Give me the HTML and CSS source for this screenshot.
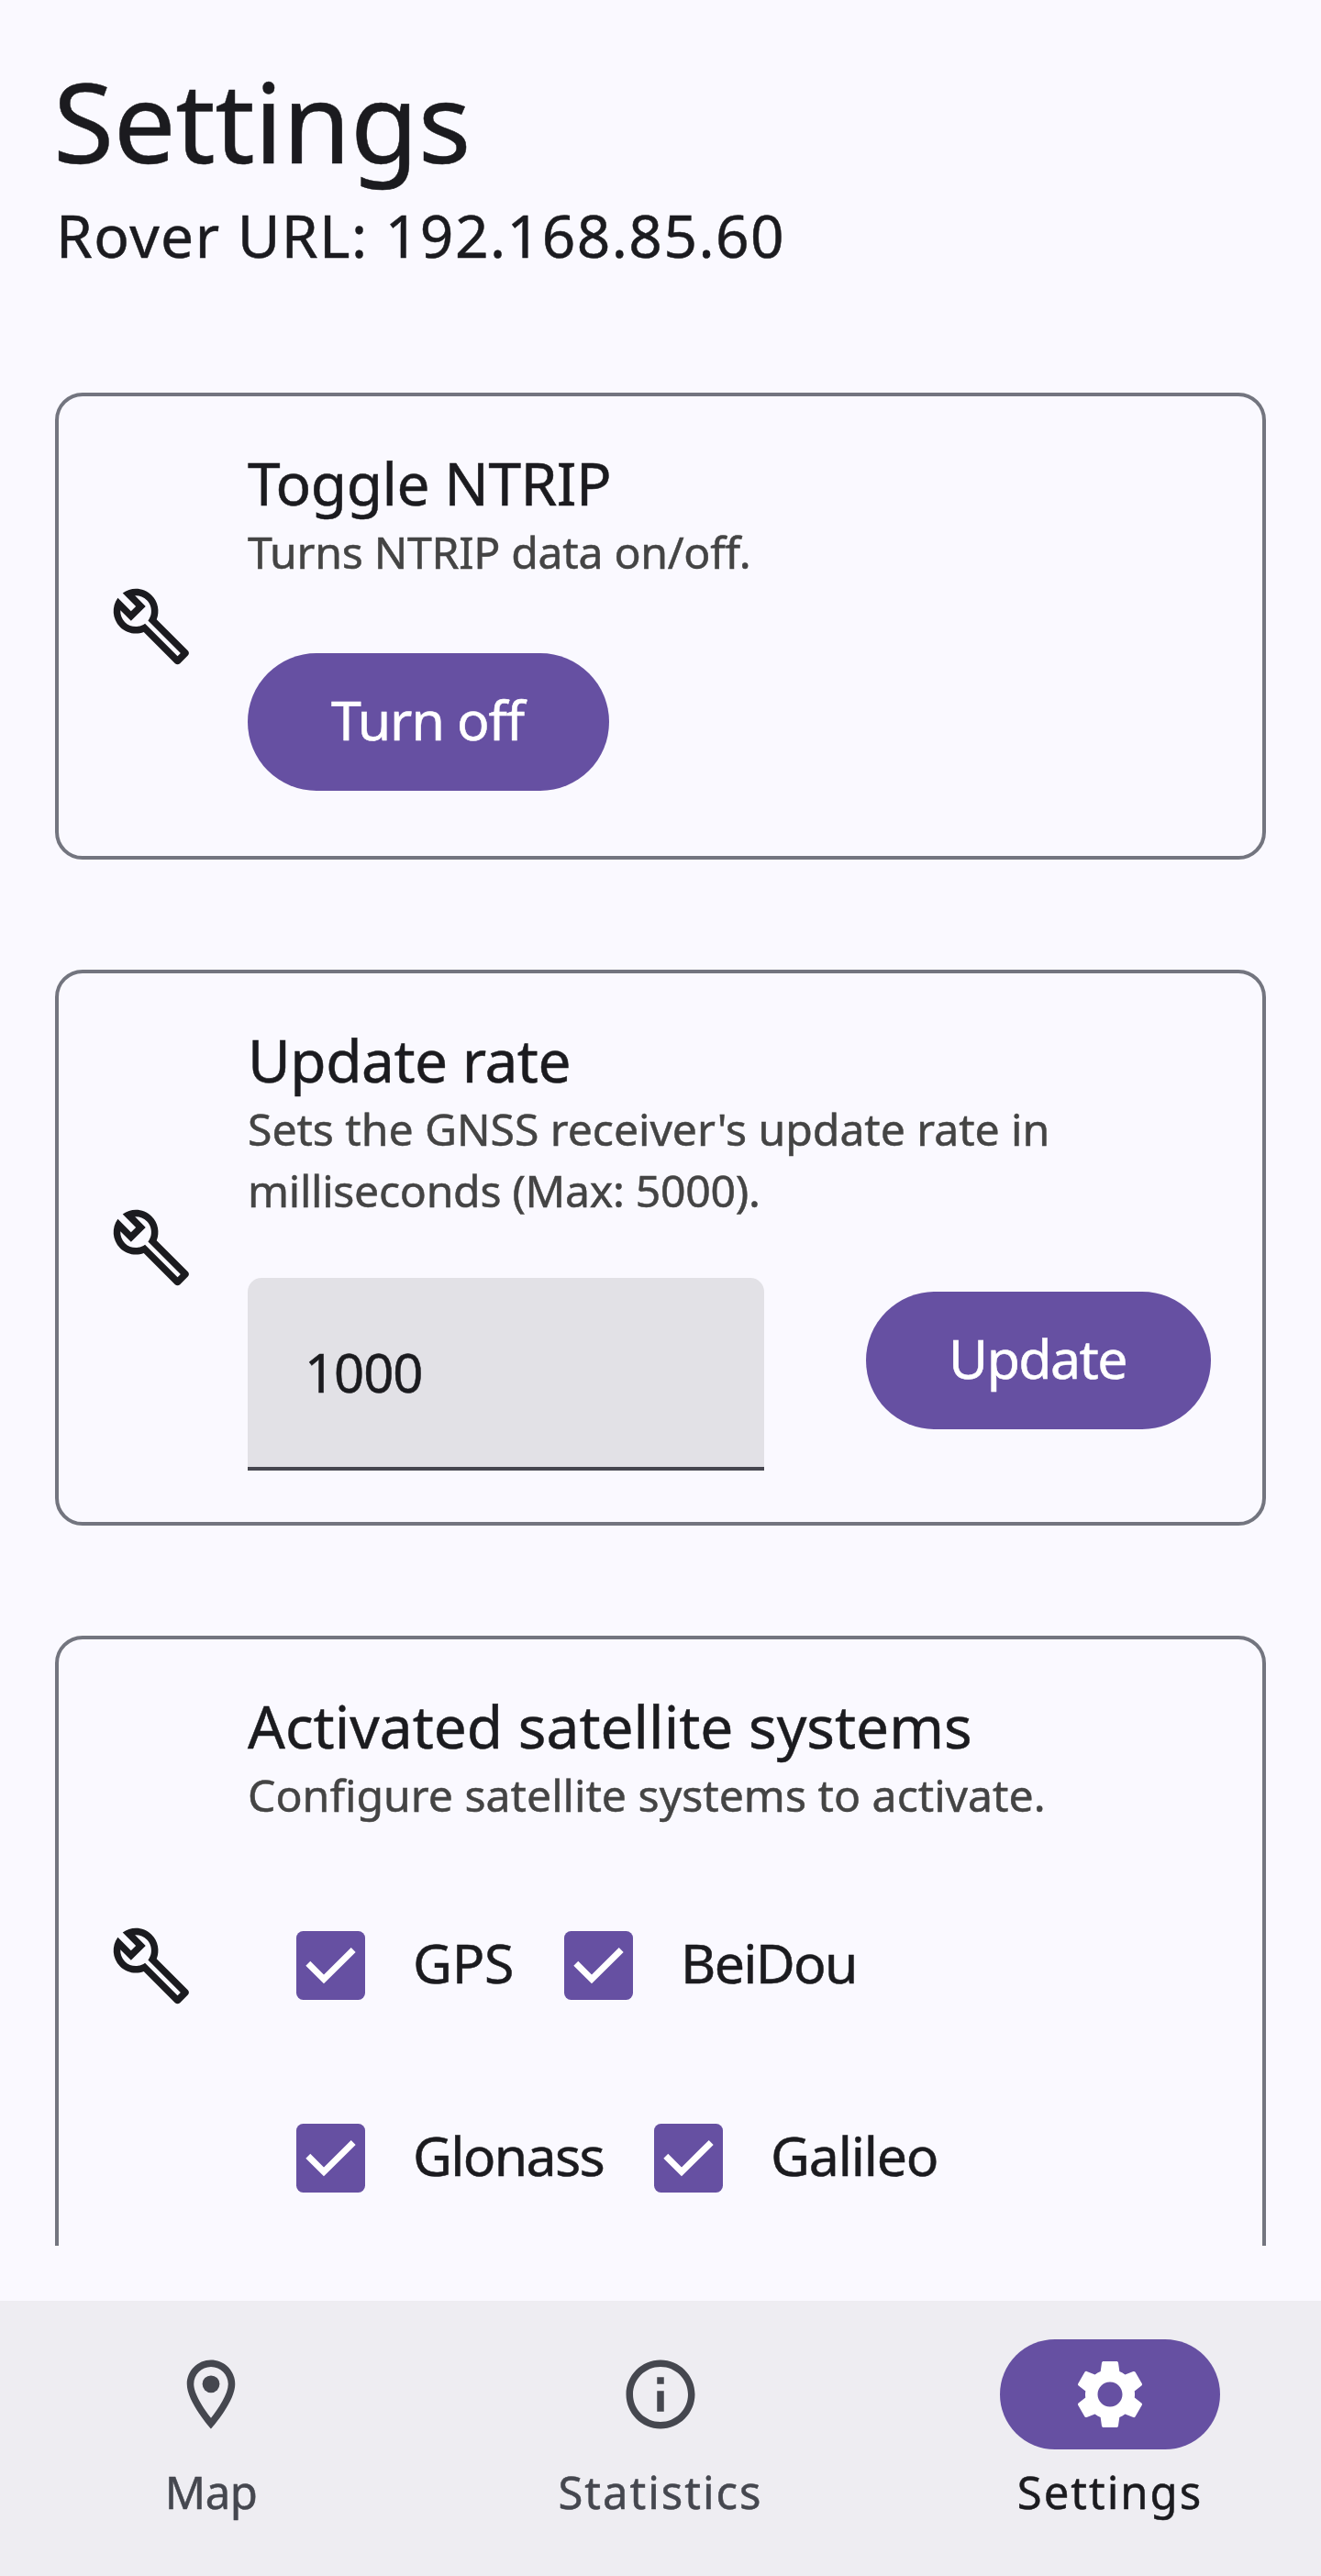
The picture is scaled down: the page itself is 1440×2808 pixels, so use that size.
FILE: index.html
```
<!DOCTYPE html>
<html lang="en">
<head>
<meta charset="utf-8">
<title>Settings</title>
<link rel="stylesheet" href="styles.css">
</head>
<body>
<svg class="defs" aria-hidden="true">
  <symbol id="wrench" viewBox="0 0 24 24"><path d="M22.61 18.99l-9.08-9.08c.93-2.34.45-5.1-1.44-7C9.79.61 6.21.4 3.66 2.26L7.5 6.11 6.08 7.52 2.25 3.69C.39 6.23.6 9.82 2.9 12.11c1.86 1.86 4.57 2.35 6.89 1.48l9.11 9.11c.39.39 1.02.39 1.41 0l2.3-2.3c.4-.38.4-1.01 0-1.41zm-3 1.6l-9.46-9.46c-.61.45-1.29.72-2 .82-1.36.2-2.79-.21-3.83-1.25C3.37 9.76 2.93 8.5 3 7.26l3.09 3.09 4.24-4.24-3.09-3.09c1.24-.07 2.49.37 3.44 1.31 1.08 1.08 1.49 2.57 1.24 3.96-.12.71-.42 1.37-.88 1.96l9.45 9.45-.88.89z"/></symbol>
  <symbol id="check" viewBox="0 0 75 75"><path d="M12.8 35.2L30 52.4L62.2 20.4" fill="none" stroke="currentColor" stroke-width="7"/></symbol>
</svg>
<div class="screen">
  <main class="content">
    <header class="header">
      <h1 class="title">Settings</h1>
      <p class="rover">Rover URL: 192.168.85.60</p>
    </header>

    <section class="card card-toggle">
      <svg class="icon"><use href="#wrench"/></svg>
      <div class="card-body">
        <h2 class="card-title tight">Toggle NTRIP</h2>
        <p class="card-text turns">Turns NTRIP data on/off.</p>
        <button class="button turn-off">Turn off</button>
      </div>
    </section>

    <section class="card card-rate">
      <svg class="icon"><use href="#wrench"/></svg>
      <div class="card-body">
        <h2 class="card-title tight">Update rate</h2>
        <p class="card-text"><span class="sets">Sets the GNSS receiver's update rate in</span><br><span class="turns">milliseconds (Max: 5000).</span></p>
        <div class="rate-row">
          <div class="field">1000</div>
          <button class="button update">Update</button>
        </div>
      </div>
    </section>

    <section class="card card-systems">
      <svg class="icon"><use href="#wrench"/></svg>
      <div class="card-body">
        <h2 class="card-title">Activated satellite systems</h2>
        <p class="card-text">Configure satellite systems to activate.</p>
        <div class="systems">
          <div class="systems-row first">
            <label class="system"><span class="box"><svg><use href="#check"/></svg></span><span class="name gps">GPS</span></label>
            <label class="system"><span class="box"><svg><use href="#check"/></svg></span><span class="name">BeiDou</span></label>
          </div>
          <div class="systems-row second">
            <label class="system"><span class="box"><svg><use href="#check"/></svg></span><span class="name">Glonass</span></label>
            <label class="system"><span class="box"><svg><use href="#check"/></svg></span><span class="name galileo">Galileo</span></label>
          </div>
        </div>
      </div>
    </section>
  </main>

  <nav class="nav">
    <a class="nav-item">
      <span class="pill"><svg class="icon" viewBox="0 0 24 24"><path d="M12 2C8.13 2 5 5.13 5 9c0 5.25 7 13 7 13s7-7.75 7-13c0-3.87-3.13-7-7-7zM7 9c0-2.76 2.24-5 5-5s5 2.24 5 5c0 2.88-2.88 7.19-5 9.88C9.92 16.21 7 11.85 7 9z"/><circle cx="12" cy="9" r="2.5"/></svg></span>
      <span class="nav-label map">Map</span>
    </a>
    <a class="nav-item">
      <span class="pill"><svg class="icon" viewBox="0 0 24 24"><path d="M11 7h2v2h-2zm0 4h2v6h-2zm1-9C6.48 2 2 6.48 2 12s4.48 10 10 10 10-4.48 10-10S17.52 2 12 2zm0 18c-4.41 0-8-3.59-8-8s3.59-8 8-8 8 3.59 8 8-3.59 8-8 8z"/></svg></span>
      <span class="nav-label">Statistics</span>
    </a>
    <a class="nav-item active">
      <span class="pill"><svg class="icon" viewBox="0 0 24 24"><path d="M19.14 12.94c.04-.3.06-.61.06-.94 0-.32-.02-.64-.07-.94l2.03-1.58c.18-.14.23-.41.12-.61l-1.92-3.32c-.12-.22-.37-.29-.59-.22l-2.39.96c-.5-.38-1.03-.7-1.62-.94L14.4 2.81c-.04-.24-.24-.41-.48-.41h-3.84c-.24 0-.43.17-.47.41L9.25 5.35C8.66 5.59 8.12 5.92 7.63 6.29L5.24 5.33c-.22-.08-.47 0-.59.22L2.74 8.87c-.12.21-.08.47.12.61l2.03 1.58C4.84 11.36 4.8 11.69 4.8 12s.02.64.07.94l-2.03 1.58c-.18.14-.23.41-.12.61l1.92 3.32c.12.22.37.29.59.22l2.39-.96c.5.38 1.03.7 1.62.94l.36 2.54c.05.24.24.41.48.41h3.84c.24 0 .44-.17.47-.41l.36-2.54c.59-.24 1.13-.56 1.62-.94l2.39.96c.22.08.47 0 .59-.22l1.92-3.32c.12-.22.07-.47-.12-.61L19.14 12.94zM12 15.6c-1.98 0-3.6-1.62-3.6-3.6s1.62-3.6 3.6-3.6 3.6 1.62 3.6 3.6-1.62 3.6-3.6 3.6z"/></svg></span>
      <span class="nav-label">Settings</span>
    </a>
  </nav>
</div>
</body>
</html>
```
FILE: styles.css
```
* { box-sizing: border-box; }

body {
  margin: 0;
  background: #faf9ff;
  color: #1b1b1f;
  font-family: "Noto Sans", "Open Sans", sans-serif;
  -webkit-text-stroke: 0.5px currentColor;
}

h1, h2, p { margin: 0; font-weight: 400; }

.defs { display: none; }

.screen {
  display: flex;
  flex-direction: column;
  width: 1440px;
  height: 2808px;
}

.content {
  height: 2448px;
  padding: 56px 60px 0;
  overflow: hidden;
}

.header { margin-bottom: 126px; }

.title {
  margin-left: -2px;
  font-size: 120.5px;
  line-height: 150px;
  letter-spacing: -0.45px;
}

.rover {
  margin-top: 6px;
  margin-left: 1px;
  font-size: 64px;
  line-height: 90px;
  letter-spacing: 1.45px;
}

.icon {
  flex: none;
  width: 90px;
  height: 90px;
  fill: currentColor;
}

.card {
  display: flex;
  align-items: center;
  gap: 60px;
  margin-bottom: 120px;
  padding: 0 56px;
  border: 4px solid #73757f;
  border-radius: 30px;
}

.card-body {
  flex: 1;
  align-self: flex-start;
  padding-top: 53px;
}

.card-toggle { height: 509px; }
.card-rate { height: 606px; }
.card-systems { height: 720px; }

.card-title {
  font-size: 64px;
  line-height: 84px;
  white-space: nowrap;
}

.tight { letter-spacing: -0.5px; }

.card-text {
  margin-top: -1px;
  color: #444;
  font-size: 48.2px;
  line-height: 67px;
  white-space: nowrap;
}

.sets { letter-spacing: -0.06px; }
.turns { letter-spacing: -0.3px; }

.button {
  display: block;
  height: 150px;
  padding: 0 2px 6px 0;
  border: 0;
  border-radius: 75px;
  background: #6650a2;
  color: #fff;
  font: 59px "Noto Sans", "Open Sans", sans-serif;
  -webkit-text-stroke: 0.5px currentColor;
}

.turn-off {
  width: 394px;
  margin-top: 77px;
  letter-spacing: -1.1px;
}

.update {
  width: 376px;
  margin-top: 15px;
  letter-spacing: -1.6px;
}

.rate-row {
  display: flex;
  align-items: flex-start;
  justify-content: space-between;
  margin-top: 62px;
}

.field {
  display: flex;
  align-items: center;
  width: 563px;
  height: 210px;
  padding: 0 60px 1px 62px;
  border-bottom: 4px solid #46464f;
  border-radius: 15px 15px 0 0;
  background: #e2e1e6;
  font-size: 58px;
  letter-spacing: -1.1px;
}

.systems {
  display: flex;
  flex-direction: column;
  gap: 135px;
  margin-top: 115px;
  padding-left: 53px;
}

.systems-row { display: grid; }
.first { grid-template-columns: 292px auto; }
.second { grid-template-columns: 390px auto; }

.system {
  display: flex;
  gap: 52px;
  height: 75px;
}

.box {
  flex: none;
  width: 75px;
  height: 75px;
  border-radius: 7.5px;
  background: #6650a2;
  color: #fff;
}

.box svg {
  display: block;
  width: 75px;
  height: 75px;
}

.name {
  font-size: 59px;
  line-height: 69px;
  letter-spacing: -1.7px;
}

.gps { letter-spacing: -0.3px; }
.galileo { letter-spacing: -1.2px; }

.nav {
  display: flex;
  gap: 30px;
  height: 300px;
  margin-top: 60px;
  padding-top: 42px;
  background: #eeedf2;
  color: #45474f;
}

.nav-item {
  display: flex;
  flex: 1;
  flex-direction: column;
  align-items: center;
  gap: 16px;
}

.pill {
  display: flex;
  align-items: center;
  justify-content: center;
  width: 240px;
  height: 120px;
  border-radius: 60px;
}

.nav-label {
  font-size: 49px;
  line-height: 60px;
  letter-spacing: 2px;
}

.map { letter-spacing: -0.5px; }

.active { color: #1b1b1f; }

.active .pill {
  background: #6650a2;
  color: #fff;
}
```
